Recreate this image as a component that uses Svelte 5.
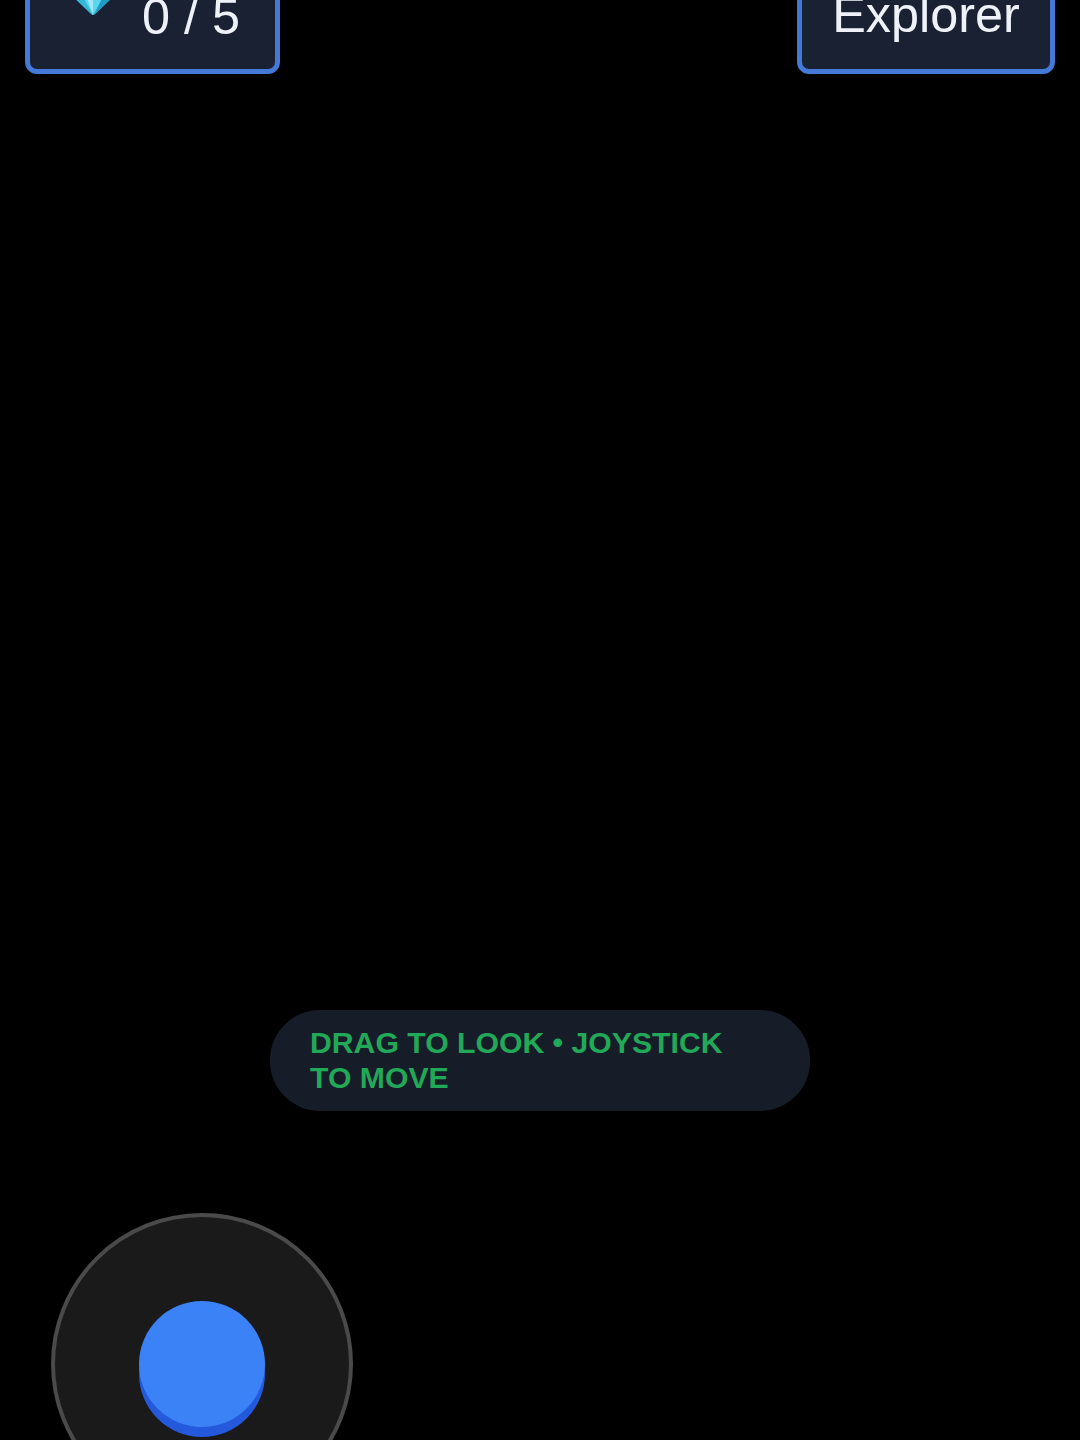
<script>
    let collected = 0;
    const total = 5;
    const mode = 'Explorer';
</script>

<div class="game">
    <header class="hud">
        <div class="panel gems">
            <svg class="gem" viewBox="0 0 44 44" aria-hidden="true">
                <path d="M0 23 L44 23 L24 42 Q22 44 20 42 Z" fill="#35b8d8" />
                <path d="M11 23 L33 23 L22 43 Z" fill="#5fd6ee" />
                <path d="M33 23 L44 23 L23 43 Z" fill="#1f9cc6" />
                <path d="M15 23 L22 23 L22 43 Z" fill="#9fe9f7" />
            </svg>
            <span class="count">{collected} / {total}</span>
        </div>
        <div class="panel mode">{mode}</div>
    </header>

    <div class="hint">DRAG TO LOOK • JOYSTICK TO MOVE</div>

    <div class="joystick">
        <div class="thumb"></div>
    </div>
</div>

<style>
    :global(body) {
        background: #000;
    }

    .game {
        height: 1440px;
        overflow: hidden;
        background: #000;
        font-family: "Liberation Sans", Arial, sans-serif;
    }

    .hud {
        display: flex;
        justify-content: space-between;
        height: 74px;
        padding: 0 25px;
        align-items: flex-end;
    }

    .panel {
        box-sizing: border-box;
        height: 120px;
        flex: none;
        display: flex;
        color: #eef2f8;
        font-size: 50.4px;
        background: #1a2132;
        border: 5px solid #4579d8;
        border-radius: 12px;
    }

    .gems {
        width: 255px;
        padding: 0 30px 0 41px;
        gap: 27px;
        align-items: flex-start;
    }

    .gem {
        flex: none;
        width: 44px;
        height: 44px;
        margin-top: 13px;
    }

    .count {
        margin-top: 30px;
        line-height: 56px;
        white-space: nowrap;
    }

    .mode {
        width: 258px;
        justify-content: center;
        padding-top: 28px;
        line-height: 56px;
    }

    .hint {
        box-sizing: border-box;
        width: 540px;
        margin: 936px auto 0;
        padding: 15px 40px 16px;
        background: #171c29;
        border-radius: 50px;
        color: #22a958;
        font-size: 30.2px;
        font-weight: 700;
        line-height: 35px;
    }

    .joystick {
        box-sizing: border-box;
        display: flex;
        justify-content: center;
        align-items: center;
        width: 302px;
        height: 302px;
        margin: 102px 0 0 51px;
        background: #1a1a1a;
        border: 4px solid #4a4a4a;
        border-radius: 50%;
    }

    .thumb {
        width: 126px;
        height: 126px;
        background: #3b82f6;
        border-radius: 50%;
        box-shadow: 0 10px 0 #2459dc;
    }
</style>
